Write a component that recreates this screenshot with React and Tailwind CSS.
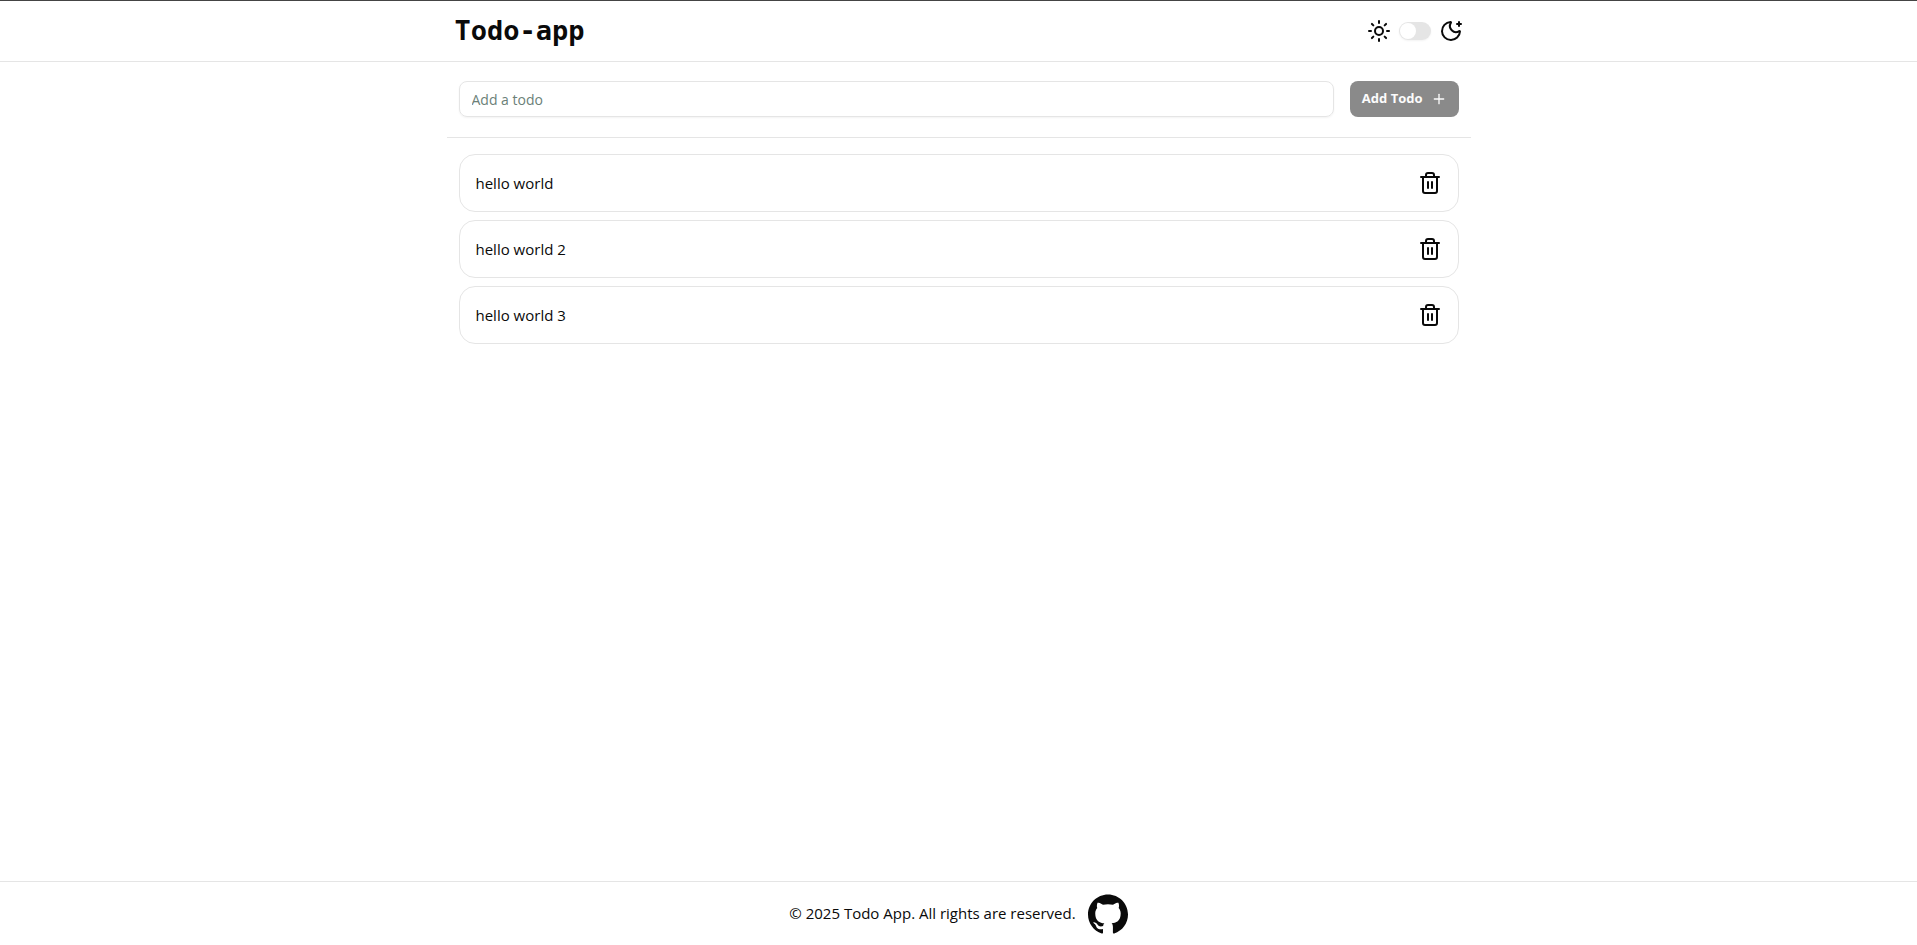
import { useState } from "react";
import { MoonStar, Plus, Sun, Trash2 } from "lucide-react";
import { SiGithub } from "react-icons/si";

const INITIAL_TODOS = [
  { id: 1, text: "hello world" },
  { id: 2, text: "hello world 2" },
  { id: 3, text: "hello world 3" },
];

function ThemeSwitch({ dark, onToggle }) {
  return (
    <div className="flex items-center gap-2">
      <Sun className="size-6" />
      <button
        type="button"
        role="switch"
        aria-checked={dark}
        aria-label="Dark mode"
        onClick={onToggle}
        className={`flex h-[18px] w-8 items-center rounded-full border border-transparent shadow-xs ${
          dark ? "justify-end bg-neutral-900" : "bg-neutral-200"
        }`}
      >
        <span className="size-4 rounded-full bg-white" />
      </button>
      <MoonStar className="size-6" />
    </div>
  );
}

function Header({ dark, onToggle }) {
  return (
    <header className="border-t border-b border-t-[#444444] border-b-neutral-200">
      <div className="mx-auto flex h-[60px] max-w-5xl items-center justify-between px-2">
        <h1 className="font-['DejaVu_Sans_Mono',monospace] text-[27px] font-bold">
          Todo-app
        </h1>
        <ThemeSwitch dark={dark} onToggle={onToggle} />
      </div>
    </header>
  );
}

function TodoForm({ onAdd }) {
  const [text, setText] = useState("");

  const handleSubmit = (e) => {
    e.preventDefault();
    onAdd(text.trim());
    setText("");
  };

  return (
    <form
      onSubmit={handleSubmit}
      className="flex gap-4 border-b border-neutral-200 px-3 pt-[19px] pb-5"
    >
      <input
        type="text"
        aria-label="Add a todo"
        placeholder="Add a todo"
        value={text}
        onChange={(e) => setText(e.target.value)}
        className="h-9 min-w-0 flex-1 rounded-lg border border-neutral-200 px-3 text-sm shadow-xs outline-none placeholder:text-[#6b7f78]"
      />
      <button
        type="submit"
        disabled={!text.trim()}
        className="flex h-9 items-center gap-2 rounded-lg bg-neutral-900 px-3 text-[13px] font-bold text-neutral-50 disabled:opacity-50"
      >
        Add Todo
        <Plus className="size-4" />
      </button>
    </form>
  );
}

function TodoItem({ todo, onDelete }) {
  return (
    <li className="flex items-center justify-between rounded-2xl border border-neutral-200 p-4">
      <span>{todo.text}</span>
      <button
        type="button"
        aria-label={`Delete ${todo.text}`}
        onClick={() => onDelete(todo.id)}
      >
        <Trash2 className="size-6" />
      </button>
    </li>
  );
}

function Footer() {
  return (
    <footer className="flex h-16 items-center justify-center gap-3 border-t border-neutral-200">
      <p>© 2025 Todo App. All rights are reserved.</p>
      <a href="https://github.com" aria-label="GitHub">
        <SiGithub className="size-10" />
      </a>
    </footer>
  );
}

export default function App() {
  const [dark, setDark] = useState(false);
  const [todos, setTodos] = useState(INITIAL_TODOS);

  const addTodo = (text) => {
    setTodos((prev) => [...prev, { id: Date.now(), text }]);
  };

  const deleteTodo = (id) => {
    setTodos((prev) => prev.filter((t) => t.id !== id));
  };

  return (
    <div className="flex min-h-screen flex-col bg-white font-['Open_Sans',sans-serif] text-[15px] text-neutral-950">
      <Header dark={dark} onToggle={() => setDark(!dark)} />
      <main className="mx-auto w-full max-w-5xl flex-1">
        <TodoForm onAdd={addTodo} />
        <ul className="flex flex-col gap-2 px-3 py-4">
          {todos.map((todo) => (
            <TodoItem key={todo.id} todo={todo} onDelete={deleteTodo} />
          ))}
        </ul>
      </main>
      <Footer />
    </div>
  );
}
